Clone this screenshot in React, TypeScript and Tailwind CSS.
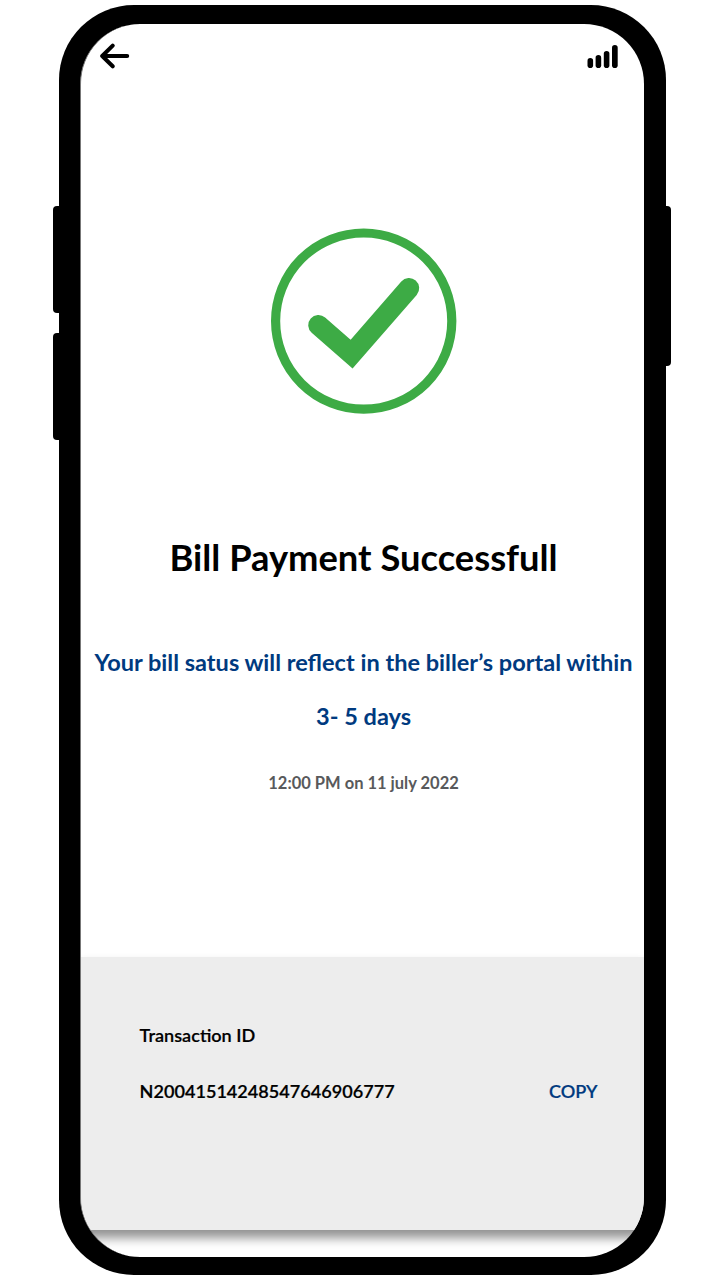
function BackArrow() {
  return (
    <svg className="h-[26px] w-[30px]" viewBox="0 0 30 26" fill="none" stroke="#000" strokeWidth="4" strokeLinecap="round" strokeLinejoin="round">
      <path d="M27.2 13H2.2M12.7 2.6L2.2 13l10.5 10.3" />
    </svg>
  );
}

function SignalBars() {
  return (
    <svg className="h-[23px] w-[31px]" viewBox="0 0 31 23" fill="#000">
      <rect x="0.5" y="13.1" width="5.6" height="9.9" rx="2.8" />
      <rect x="8.6" y="10.1" width="5.6" height="12.9" rx="2.8" />
      <rect x="16.8" y="5.9" width="5.6" height="17.1" rx="2.8" />
      <rect x="25" y="0" width="5.7" height="23" rx="2.8" />
    </svg>
  );
}

function SuccessMark() {
  return (
    <svg className="h-[186px] w-[186px]" viewBox="0 0 186 186" fill="none" stroke="#3dab45">
      <circle cx="92.7" cy="93.1" r="88.1" strokeWidth="9.2" />
      <path d="M47.4 97.1L80.6 126.2L138 60.2" strokeWidth="20.4" strokeLinecap="round" strokeLinejoin="miter" />
    </svg>
  );
}

export default function App() {
  return (
    <div className="flex h-[1280px] w-[724px] items-start overflow-hidden bg-white pt-[5px] pl-[53.3px] font-['Lato',sans-serif] font-semibold text-black">
      <div className="flex w-[5.5px] shrink-0 flex-col gap-[20.6px] pt-[201px]">
        <div className="-mr-1 h-[106.5px] rounded-l-[4px] bg-black" />
        <div className="-mr-1 h-[106.5px] rounded-l-[4px] bg-black" />
      </div>
      <div className="h-[1270.4px] w-[607.5px] shrink-0 rounded-[75px] bg-black pt-[18.6px] pr-[22.3px] pb-[18.8px] pl-[21.3px]">
        <div className="flex h-full flex-col overflow-hidden rounded-[60px] border-l border-[#777] bg-white">
          <header className="flex shrink-0 justify-between pt-[19.4px] pr-[26px] pl-[19px]">
            <BackArrow />
            <div className="pt-[2px]">
              <SignalBars />
            </div>
          </header>
          <main className="flex h-[888px] shrink-0 flex-col items-center pt-[159px] pl-[2px] text-center font-bold whitespace-nowrap">
            <SuccessMark />
            <h1 className="mt-[119px] text-[36.3px] leading-[48px]">Bill Payment Successfull</h1>
            <p className="mt-[54px] text-[23.55px] leading-[54px] text-[#003a7f]">
              Your bill satus will reflect in the biller’s portal within
              <br />
              3- 5 days
            </p>
            <p className="mt-[28px] text-[16.5px] leading-6 text-[#58595b]">12:00 PM on 11 july 2022</p>
          </main>
          <section className="h-[273px] shrink-0 bg-[#ededed] pr-[46.5px] pl-[58.5px] pt-[66px] text-[18.08px] leading-6 shadow-[0_8px_10px_rgba(0,0,0,0.43)] [-webkit-text-stroke:0.2px]">
            <p>Transaction ID</p>
            <div className="mt-8 flex justify-between">
              <span>N20041514248547646906777</span>
              <button className="text-[#003a7f]">COPY</button>
            </div>
          </section>
        </div>
      </div>
      <div className="mt-[201px] -ml-1 h-[159.5px] w-[9px] shrink-0 rounded-r-[4px] bg-black" />
    </div>
  );
}
